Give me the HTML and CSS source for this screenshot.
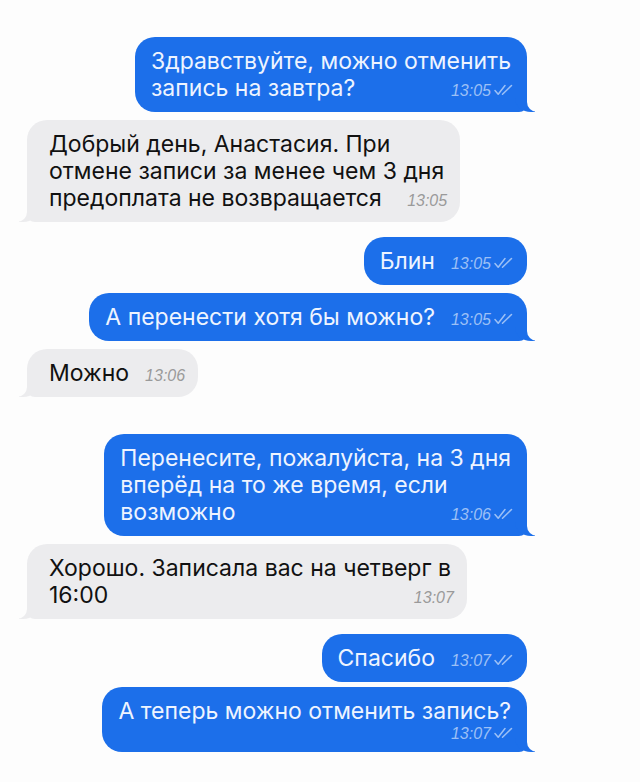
FILE: index.html
```html
<!DOCTYPE html>
<html lang="ru">
<head>
  <meta charset="UTF-8" />
  <meta name="viewport" content="width=device-width, initial-scale=1.0" />
  <title>Чат</title>
  <link rel="stylesheet" href="styles.css">
</head>
<body>
  <div class="chat">
    <div class="msg out tail">
      Здравствуйте, можно отменить<br>запись на завтра?<span class="meta">13:05<svg class="ticks" viewBox="0 0 20 12"><path d="M1 6.5l3.2 3.8L11 1.5M8.5 10.3L17.5 1.5"/></svg></span>
    </div>
    <div class="msg in tail">
      Добрый день, Анастасия. При<br>отмене записи за менее чем 3 дня<br>предоплата не возвращается<span class="meta">13:05</span>
    </div>
    <div class="msg out gap-md">
      Блин<span class="meta">13:05<svg class="ticks" viewBox="0 0 20 12"><path d="M1 6.5l3.2 3.8L11 1.5M8.5 10.3L17.5 1.5"/></svg></span>
    </div>
    <div class="msg out tail">
      А перенести хотя бы можно?<span class="meta">13:05<svg class="ticks" viewBox="0 0 20 12"><path d="M1 6.5l3.2 3.8L11 1.5M8.5 10.3L17.5 1.5"/></svg></span>
    </div>
    <div class="msg in tail">
      Можно<span class="meta">13:06</span>
    </div>

    <div class="msg out tail gap-lg">
      Перенесите, пожалуйста, на 3 дня<br>вперёд на то же время, если<br>возможно<span class="meta">13:06<svg class="ticks" viewBox="0 0 20 12"><path d="M1 6.5l3.2 3.8L11 1.5M8.5 10.3L17.5 1.5"/></svg></span>
    </div>
    <div class="msg in tail">
      Хорошо. Записала вас на четверг в<br>16:00<span class="meta">13:07</span>
    </div>
    <div class="msg out gap-md">
      Спасибо<span class="meta">13:07<svg class="ticks" viewBox="0 0 20 12"><path d="M1 6.5l3.2 3.8L11 1.5M8.5 10.3L17.5 1.5"/></svg></span>
    </div>
    <div class="msg out tail tight">
      А теперь можно отменить запись?<br><span class="meta below">13:07<svg class="ticks" viewBox="0 0 20 12"><path d="M1 6.5l3.2 3.8L11 1.5M8.5 10.3L17.5 1.5"/></svg></span>
    </div>
  </div>
</body>
</html>
```

FILE: styles.css
```css
:root {
  --blue: #1c6fea;
  --gray: #ececee;
  --page: #fdfdfd;
}

body {
  margin: 0;
  background: var(--page);
  font-family: Inter, 'Liberation Sans', sans-serif;
}

.chat {
  display: flex;
  flex-direction: column;
  align-items: flex-start;
  gap: 8px;
  padding: 37px 113px 20px 27px;
}

.msg {
  position: relative;
  padding: 11px 16px 10px;
  border-radius: 20px;
  font-size: 23px;
  line-height: 27px;
}

.msg.out {
  align-self: flex-end;
  background: var(--blue);
  color: #eef4ff;
}

.msg.in {
  background: var(--gray);
  color: #111;
  padding-left: 22px;
  padding-right: 16px;
}

.gap-md { margin-top: 7px; }
.gap-lg { margin-top: 29px; }
.tight { margin-top: -3px; }

/* time + read ticks, sits at the end of the last line */
.meta {
  float: right;
  margin: 6px -3px 0 16px;
  font-family: 'Liberation Sans', sans-serif;
  font-size: 16px;
  font-style: italic;
  line-height: 20px;
  color: #9a9a9a;
}

.meta.below {
  margin-top: 1px;
  line-height: 16px;
}

.out .meta {
  color: #9cc0f6;
}

.ticks {
  width: 20px;
  height: 12px;
  margin-left: 3px;
  fill: none;
  stroke: currentColor;
  stroke-width: 1.5;
  stroke-linecap: round;
  stroke-linejoin: round;
}

/* bubble tails */
.msg.tail::before,
.msg.tail::after {
  content: "";
  position: absolute;
  bottom: 0;
  height: 20px;
}

.out.tail { border-bottom-right-radius: 8px; }
.in.tail { border-bottom-left-radius: 8px; }

.out.tail::before {
  right: -8px;
  width: 20px;
  background: var(--blue);
  border-bottom-left-radius: 16px 14px;
}

.out.tail::after {
  right: -26px;
  width: 26px;
  background: var(--page);
  border-bottom-left-radius: 10px;
}

.in.tail::before {
  left: -8px;
  width: 20px;
  background: var(--gray);
  border-bottom-right-radius: 16px 14px;
}

.in.tail::after {
  left: -26px;
  width: 26px;
  background: var(--page);
  border-bottom-right-radius: 10px;
}
```
